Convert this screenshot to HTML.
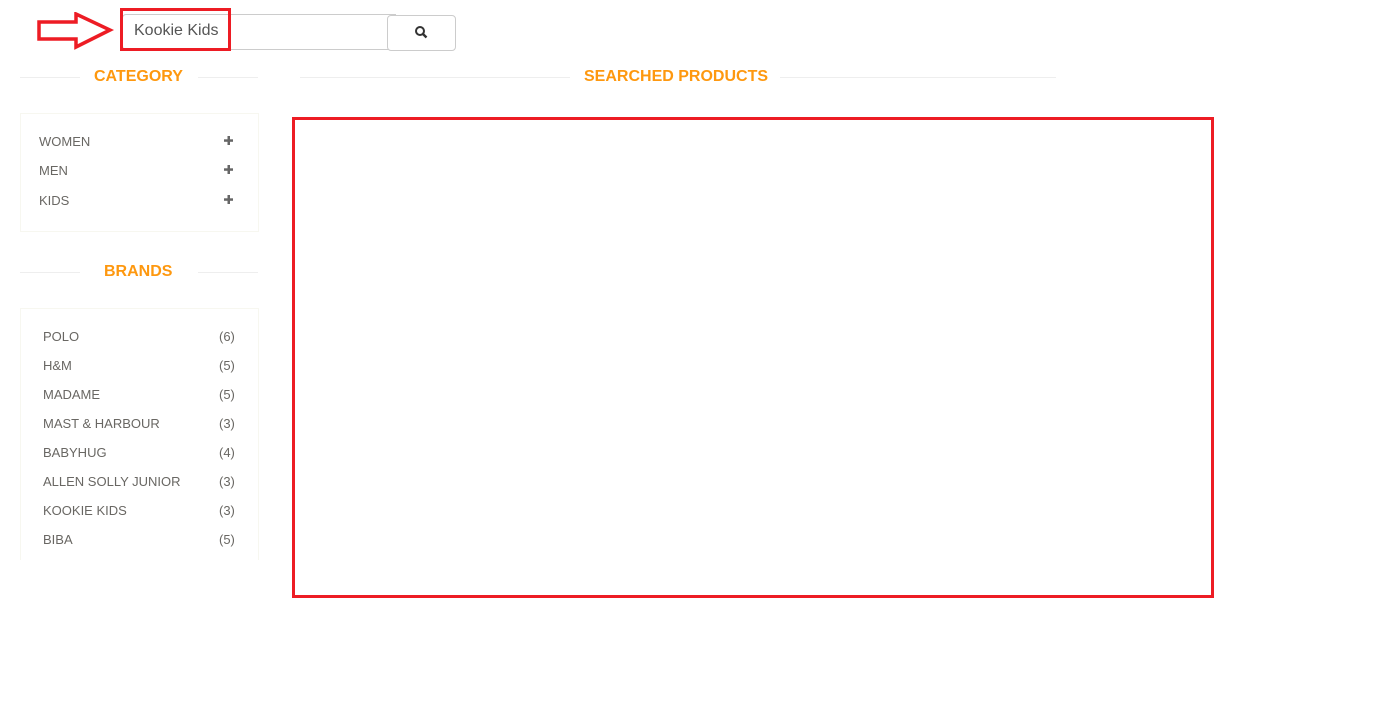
<!DOCTYPE html>
<html><head><style>
body{margin:0;width:1394px;height:727px;background:#fff;font-family:"Liberation Sans",Arial,sans-serif;position:relative;overflow:hidden}
.a{position:absolute}
.line{position:absolute;height:1px;background:#eee}
.h{position:absolute;color:#fe980f;font-weight:bold;font-size:16px}
.it{position:absolute;font-size:13px;color:#696763}
.pl{position:absolute}
.ct{position:absolute;font-size:13px;color:#696763}
</style></head><body>
<svg class="a" style="left:36px;top:12px" width="80" height="38"><path d="M3 10 H40 V2 L74 18 L40 35 V27 H3 Z" fill="none" stroke="#ed1c24" stroke-width="3.5"/></svg>
<div class="a" style="left:122px;top:14px;width:272px;height:34px;border:1px solid #ccc;border-radius:4px 0 0 4px"></div>
<div class="a" style="left:387px;top:15px;width:67px;height:34px;border:1px solid #ccc;border-radius:4px;background:#fff"></div>
<svg class="a" style="left:414px;top:25px" width="14" height="14"><circle cx="6" cy="6" r="4" fill="none" stroke="#333" stroke-width="2"/><path d="M9 9 L12.5 12.5" stroke="#333" stroke-width="2.4"/></svg>
<div class="a" style="left:120px;top:8px;width:105px;height:37px;border:3px solid #ed1c24"></div>
<div class="a" style="left:134px;top:22px;font-size:16px;color:#555">Kookie Kids</div>

<div class="line" style="left:20px;top:77px;width:60px"></div>
<div class="line" style="left:198px;top:77px;width:60px"></div>
<div class="h" style="left:94px;top:68px">CATEGORY</div>
<div class="line" style="left:300px;top:77px;width:270px"></div>
<div class="line" style="left:780px;top:77px;width:276px"></div>
<div class="h" style="left:584px;top:68px">SEARCHED PRODUCTS</div>

<div class="a" style="left:20px;top:113px;width:237px;height:117px;border:1px solid #f7f7f0"></div>
<div class="it" style="left:39px;top:134px">WOMEN</div>
<div class="it" style="left:39px;top:163px">MEN</div>
<div class="it" style="left:39px;top:193px">KIDS</div>
<svg class="pl" style="left:224px;top:136px" width="10" height="70" fill="#666"><rect x="3.5" y="0" width="2.5" height="9"/><rect x="0" y="3.3" width="9" height="2.5"/><rect x="3.5" y="29" width="2.5" height="9"/><rect x="0" y="32.3" width="9" height="2.5"/><rect x="3.5" y="59" width="2.5" height="9"/><rect x="0" y="62.3" width="9" height="2.5"/></svg>

<div class="line" style="left:20px;top:272px;width:60px"></div>
<div class="line" style="left:198px;top:272px;width:60px"></div>
<div class="h" style="left:104px;top:263px">BRANDS</div>

<div class="a" style="left:20px;top:308px;width:237px;height:260px;border:1px solid #f7f7f0;border-bottom:none"></div>
<div class="it" style="left:43px;top:329px">POLO</div><div class="ct" style="left:219px;top:329px">(6)</div>
<div class="it" style="left:43px;top:358px">H&amp;M</div><div class="ct" style="left:219px;top:358px">(5)</div>
<div class="it" style="left:43px;top:387px">MADAME</div><div class="ct" style="left:219px;top:387px">(5)</div>
<div class="it" style="left:43px;top:416px">MAST &amp; HARBOUR</div><div class="ct" style="left:219px;top:416px">(3)</div>
<div class="it" style="left:43px;top:445px">BABYHUG</div><div class="ct" style="left:219px;top:445px">(4)</div>
<div class="it" style="left:43px;top:474px">ALLEN SOLLY JUNIOR</div><div class="ct" style="left:219px;top:474px">(3)</div>
<div class="it" style="left:43px;top:503px">KOOKIE KIDS</div><div class="ct" style="left:219px;top:503px">(3)</div>
<div class="it" style="left:43px;top:532px">BIBA</div><div class="ct" style="left:219px;top:532px">(5)</div>
<div class="a" style="left:0;top:560px;width:290px;height:20px;background:#fff"></div>

<div class="a" style="left:292px;top:117px;width:916px;height:475px;border:3px solid #ed1c24"></div>
</body></html>
